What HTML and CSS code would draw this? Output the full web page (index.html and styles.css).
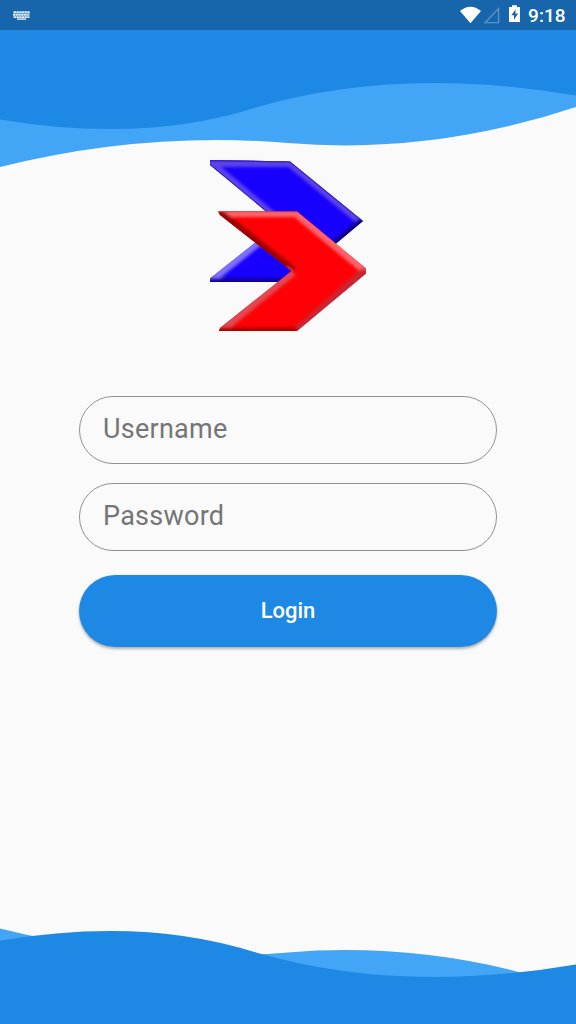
FILE: index.html
```html
<!DOCTYPE html>
<html lang="en">
<head>
<meta charset="utf-8">
<title>Login</title>
<link rel="stylesheet" href="styles.css">
</head>
<body>
<div class="screen">
  <svg class="wave wave-top" viewBox="0 0 576 168">
    <path class="light" d="M0 0V167Q144 131 288 143Q432 155 576 107V0Z"/>
    <path class="dark" d="M0 0V119.5Q144 143.5 256 107.5Q398.8 65.5 576 95.5V0Z"/>
  </svg>
  <svg class="wave wave-bottom" viewBox="0 916 576 108">
    <path class="light" d="M0 1024V928.5Q144 964.5 288 952.5Q432 940.5 576 988.5V1024Z"/>
    <path class="dark" d="M0 1024V940.5Q144 916.5 256 952.5Q398.8 994.5 576 964.5V1024Z"/>
  </svg>

  <header class="status">
    <svg class="keyboard" width="17" height="10" viewBox="0 0 17 10">
      <path d="M0 0H17V7H0Z" fill="#6b9dc9"/>
      <path d="M1 1.2H17M0 3.7H16M1 6.2H16" stroke="#edf4f9" stroke-width="1.4" stroke-dasharray="2 .7"/>
      <path d="M4 7.2H13V9H4Z" fill="#b9d1e5"/>
    </svg>
    <svg class="indicators" width="62" height="20" viewBox="460 5 62 20">
      <path d="M460 11Q470.5 2.5 481 11L470.5 23.3Z" fill="#fff"/>
      <path d="M485.2 22.6H498.6V8.6Z" fill="none" stroke="#5b92c4" stroke-width="1.4"/>
      <path d="M512 5.2H517V7H520V22H509V7H512Z" fill="#fff"/>
      <path d="M515.8 9.2L511.3 15.2H514V19.8L518.1 13.6H515.3Z" fill="#1766ac"/>
    </svg>
    <span class="clock">9:18</span>
  </header>

  <main class="login">
    <svg class="logo" width="158" height="174" viewBox="209 158 158 174">
      <defs>
        <filter id="soft" x="-20%" y="-20%" width="140%" height="140%"><feGaussianBlur stdDeviation="1.5"/></filter>
        <clipPath id="back"><path d="M210 160L290 161.5L363 221L290 282H210V278.5L280 223L210 165Z"/></clipPath>
        <clipPath id="front"><path d="M218 211.5H297L366 268.5V273.5L297 331H219L220 328L291.5 271L220 215Z"/></clipPath>
      </defs>
      <g clip-path="url(#back)">
        <path d="M209 158H364V283H209Z" fill="#1800ff"/>
        <g filter="url(#soft)" fill="none" stroke-width="8">
          <path d="M209 280L280 223" stroke="#8070ff" stroke-width="11"/>
          <path d="M209 163L280 223" stroke="#5a43ed" stroke-width="10"/>
          <path d="M210 162H290L363 222" stroke="#5a43e8" stroke-width="10"/>
          <path d="M364 221L290 283" stroke="#0d0089" stroke-width="10"/>
          <path d="M208 282H290" stroke="#0e0099"/>
        </g>
        <path d="M210 160.5L290 161.5L363 221M209 164L280 223" fill="none" stroke="#2b16a4" stroke-opacity=".7" stroke-width="1.8"/>
      </g>
      <g clip-path="url(#front)">
        <path d="M217 210H367V332H217Z" fill="#ff0006"/>
        <g filter="url(#soft)" fill="none" stroke-width="8">
          <path d="M219 213H297" stroke="#ff666b"/>
          <path d="M296 212L366 270" stroke="#ff626b" stroke-width="10"/>
          <path d="M366 271L297 331" stroke="#c92833" stroke-width="9"/>
          <path d="M218 213L292 271" stroke="#9c0005" stroke-width="10"/>
          <path d="M292 271L219 330" stroke="#e34750" stroke-width="11"/>
          <path d="M217 331H297" stroke="#ab0006" stroke-width="7"/>
        </g>
        <path d="M218 211.5H297" stroke="#cf3037" stroke-width="1.5"/>
      </g>
    </svg>
    <form class="form">
      <input class="field" type="text" placeholder="Username" aria-label="Username">
      <input class="field" type="password" placeholder="Password" aria-label="Password">
      <button class="submit" type="button">Login</button>
    </form>
  </main>
</div>
</body>
</html>
```
FILE: styles.css
```css
* {
  box-sizing: border-box;
}
body {
  margin: 0;
  font-family: Roboto, sans-serif;
}
.screen {
  position: relative;
  display: flex;
  flex-direction: column;
  width: 576px;
  height: 1024px;
  overflow: hidden;
  background: #fafafa;
}
.wave {
  position: absolute;
  left: 0;
  width: 576px;
}
.wave-top {
  top: 0;
  height: 168px;
}
.wave-bottom {
  bottom: 0;
  height: 108px;
}
.light {
  fill: #42a5f5;
}
.dark {
  fill: #1e88e5;
}
.status {
  position: relative;
  display: flex;
  align-items: flex-start;
  height: 30px;
  padding: 5px 10.5px 0 13px;
  background: #1766ac;
  color: #fff;
}
.keyboard {
  margin-top: 6px;
}
.indicators {
  margin-left: auto;
}
.clock {
  margin-left: 6.5px;
  font-size: 19px;
  font-weight: 500;
  line-height: 22px;
}
.login {
  position: relative;
  display: flex;
  flex-direction: column;
  align-items: center;
  padding: 128px 79px 0;
}
.logo {
  display: block;
}
.form {
  display: flex;
  flex-direction: column;
  align-self: stretch;
  padding-top: 64px;
}
.field {
  height: 68px;
  margin: 0 0 19.4px;
  padding: 0 23px 2px;
  border: 1.2px solid #919191;
  border-radius: 34px;
  background: transparent;
  font: 400 27px Roboto, sans-serif;
  letter-spacing: 0.25px;
}
.field::placeholder {
  color: #757575;
  opacity: 1;
}
.submit {
  height: 71.5px;
  margin-top: 4.5px;
  padding: 0 0 2px;
  border: 0;
  border-radius: 36px;
  background: #1e88e5;
  box-shadow: 0 2px 3px rgba(0, 0, 0, 0.3);
  color: #fff;
  font: 500 22px Roboto, sans-serif;
}
```
